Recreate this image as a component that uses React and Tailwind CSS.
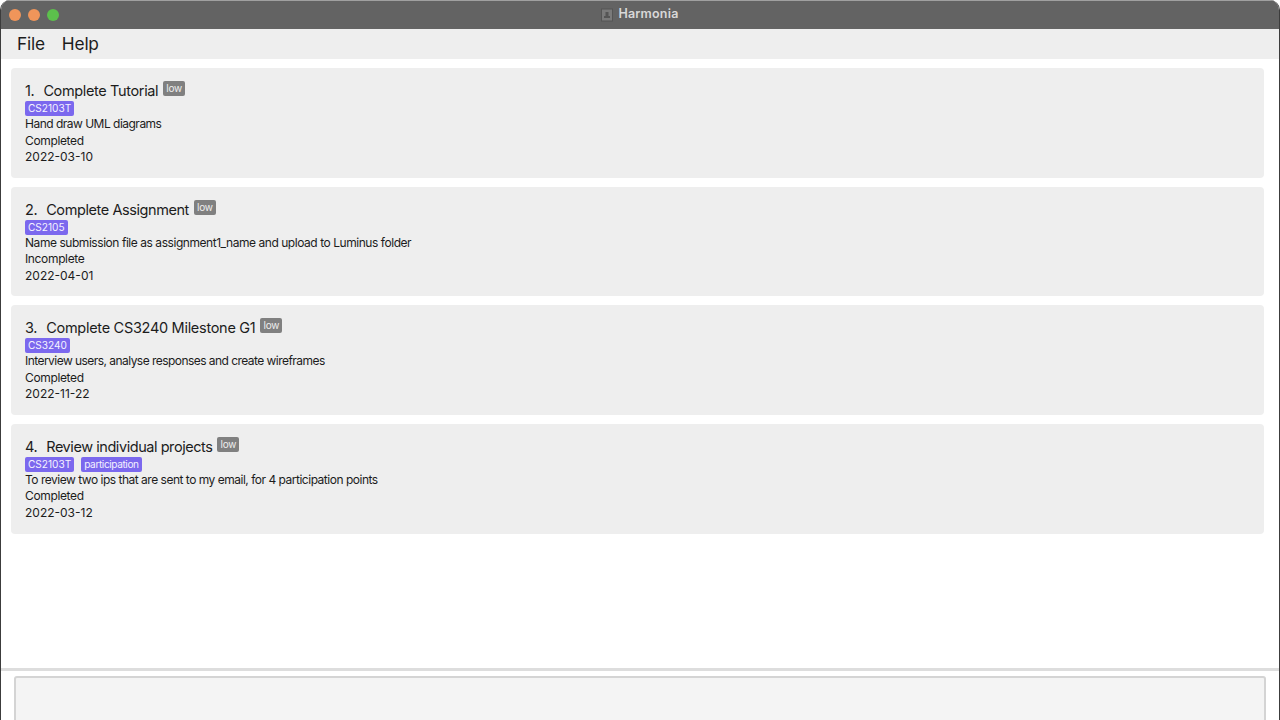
const tasks = [
  { id: 1, name: 'Complete Tutorial', nameTrack: 'tracking-[-0.36px]', tags: ['CS2103T'], desc: 'Hand draw UML diagrams', descTrack: 'tracking-[-0.51px]', status: 'Completed', date: '2022-03-10' },
  { id: 2, name: 'Complete Assignment', nameTrack: 'tracking-[-0.42px]', tags: ['CS2105'], desc: 'Name submission file as assignment1_name and upload to Luminus folder', descTrack: 'tracking-[-0.45px]', status: 'Incomplete', date: '2022-04-01' },
  { id: 3, name: 'Complete CS3240 Milestone G1', nameTrack: 'tracking-[-0.29px]', tags: ['CS3240'], desc: 'Interview users, analyse responses and create wireframes', descTrack: 'tracking-[-0.545px]', status: 'Completed', date: '2022-11-22' },
  { id: 4, name: 'Review individual projects', nameTrack: 'tracking-[-0.44px]', tags: ['CS2103T', 'participation'], desc: 'To review two ips that are sent to my email, for 4 participation points', descTrack: 'tracking-[-0.49px]', status: 'Completed', date: '2022-03-12' },
];

function TaskCard({ task }) {
  return (
    <div className="h-[109.67px] rounded-[4px] bg-[#eeeeee] pl-[14px] pt-[13px] text-[#1c1c1c]">
      <div className="flex h-[19px] items-start">
        <span className={`mr-[5px] text-[14.5px] leading-[20px] ${task.nameTrack}`}>
          <span className="mr-[9px]">{task.id}.</span>
          {task.name}
        </span>
        <span className="h-[15px] rounded-[2px] bg-[#808080] px-[3px] text-[10px] leading-[14px] tracking-[-0.2px] text-[#eeeeee]">low</span>
      </div>
      <div className="flex h-[16px] gap-[7px] pt-[1px]">
        {task.tags.map((tag) => (
          <span key={tag} className={`h-[15px] rounded-[2px] bg-[#7b68ee] px-[3px] text-[10.1px] leading-[15px] text-[#f4f2ff] ${tag === 'participation' ? 'tracking-[-0.4px]' : ''}`}>{tag}</span>
        ))}
      </div>
      <div className={`h-[16.5px] text-[12px] leading-[16.5px] ${task.descTrack}`}>{task.desc}</div>
      <div className="h-[16.5px] text-[12px] leading-[16.5px] tracking-[-0.35px]">{task.status}</div>
      <div className="h-[16.5px] text-[12px] leading-[16.5px]">{task.date}</div>
    </div>
  );
}

export default function App() {
  return (
    <div className="h-[720px] w-[1280px] overflow-hidden bg-white font-['Inter','Liberation_Sans',sans-serif]">
      <div className="flex h-full flex-col overflow-hidden rounded-t-[10px] border-x border-[#3c3c3c]">
        <div className="relative flex h-[29px] shrink-0 items-center justify-center border-t border-[#a0a0a0] bg-[#636363] pb-[1px]">
          <div className="absolute left-[8px] top-[8px] flex gap-[7px]">
            <span className="h-[12px] w-[12px] rounded-full bg-[#f0955a]" />
            <span className="h-[12px] w-[12px] rounded-full bg-[#f0955a]" />
            <span className="h-[12px] w-[12px] rounded-full bg-[#5cc04c]" />
          </div>
          <div className="flex items-center gap-[5px]">
            <svg width="12" height="14" viewBox="0 0 12 14">
              <rect x="0.5" y="1" width="11" height="12" fill="#7a7a7a" stroke="#555555" />
              <path d="M3 10V8h1.5V4h3v4H9v2Z" fill="#555555" />
            </svg>
            <span className="text-[12.5px] font-semibold tracking-[0.2px] text-[#d8d8d8]">Harmonia</span>
          </div>
        </div>

        <div className="flex h-[30px] shrink-0 items-center gap-[17px] bg-[#eeeeee] bg-[radial-gradient(#e4e4e4_0.6px,transparent_0.7px)] bg-[length:4px_4px] pb-[1px] pl-[16px] text-[17.3px] tracking-[-0.2px] text-[#1c1c1c]">
          <span>File</span>
          <span>Help</span>
        </div>

        <div className="flex flex-1 flex-col gap-[9px] pl-[10px] pr-[15px] pt-[9px]">
          {tasks.map((task) => (
            <TaskCard key={task.id} task={task} />
          ))}
        </div>

        <div className="h-[52px] shrink-0 border-t-[3px] border-[#dddddd] pl-[13px] pr-[13px] pt-[5px]">
          <div className="h-[60px] rounded-[3px] border-2 border-[#d4d4d4] bg-[#f4f4f4]" />
        </div>
      </div>
    </div>
  );
}
